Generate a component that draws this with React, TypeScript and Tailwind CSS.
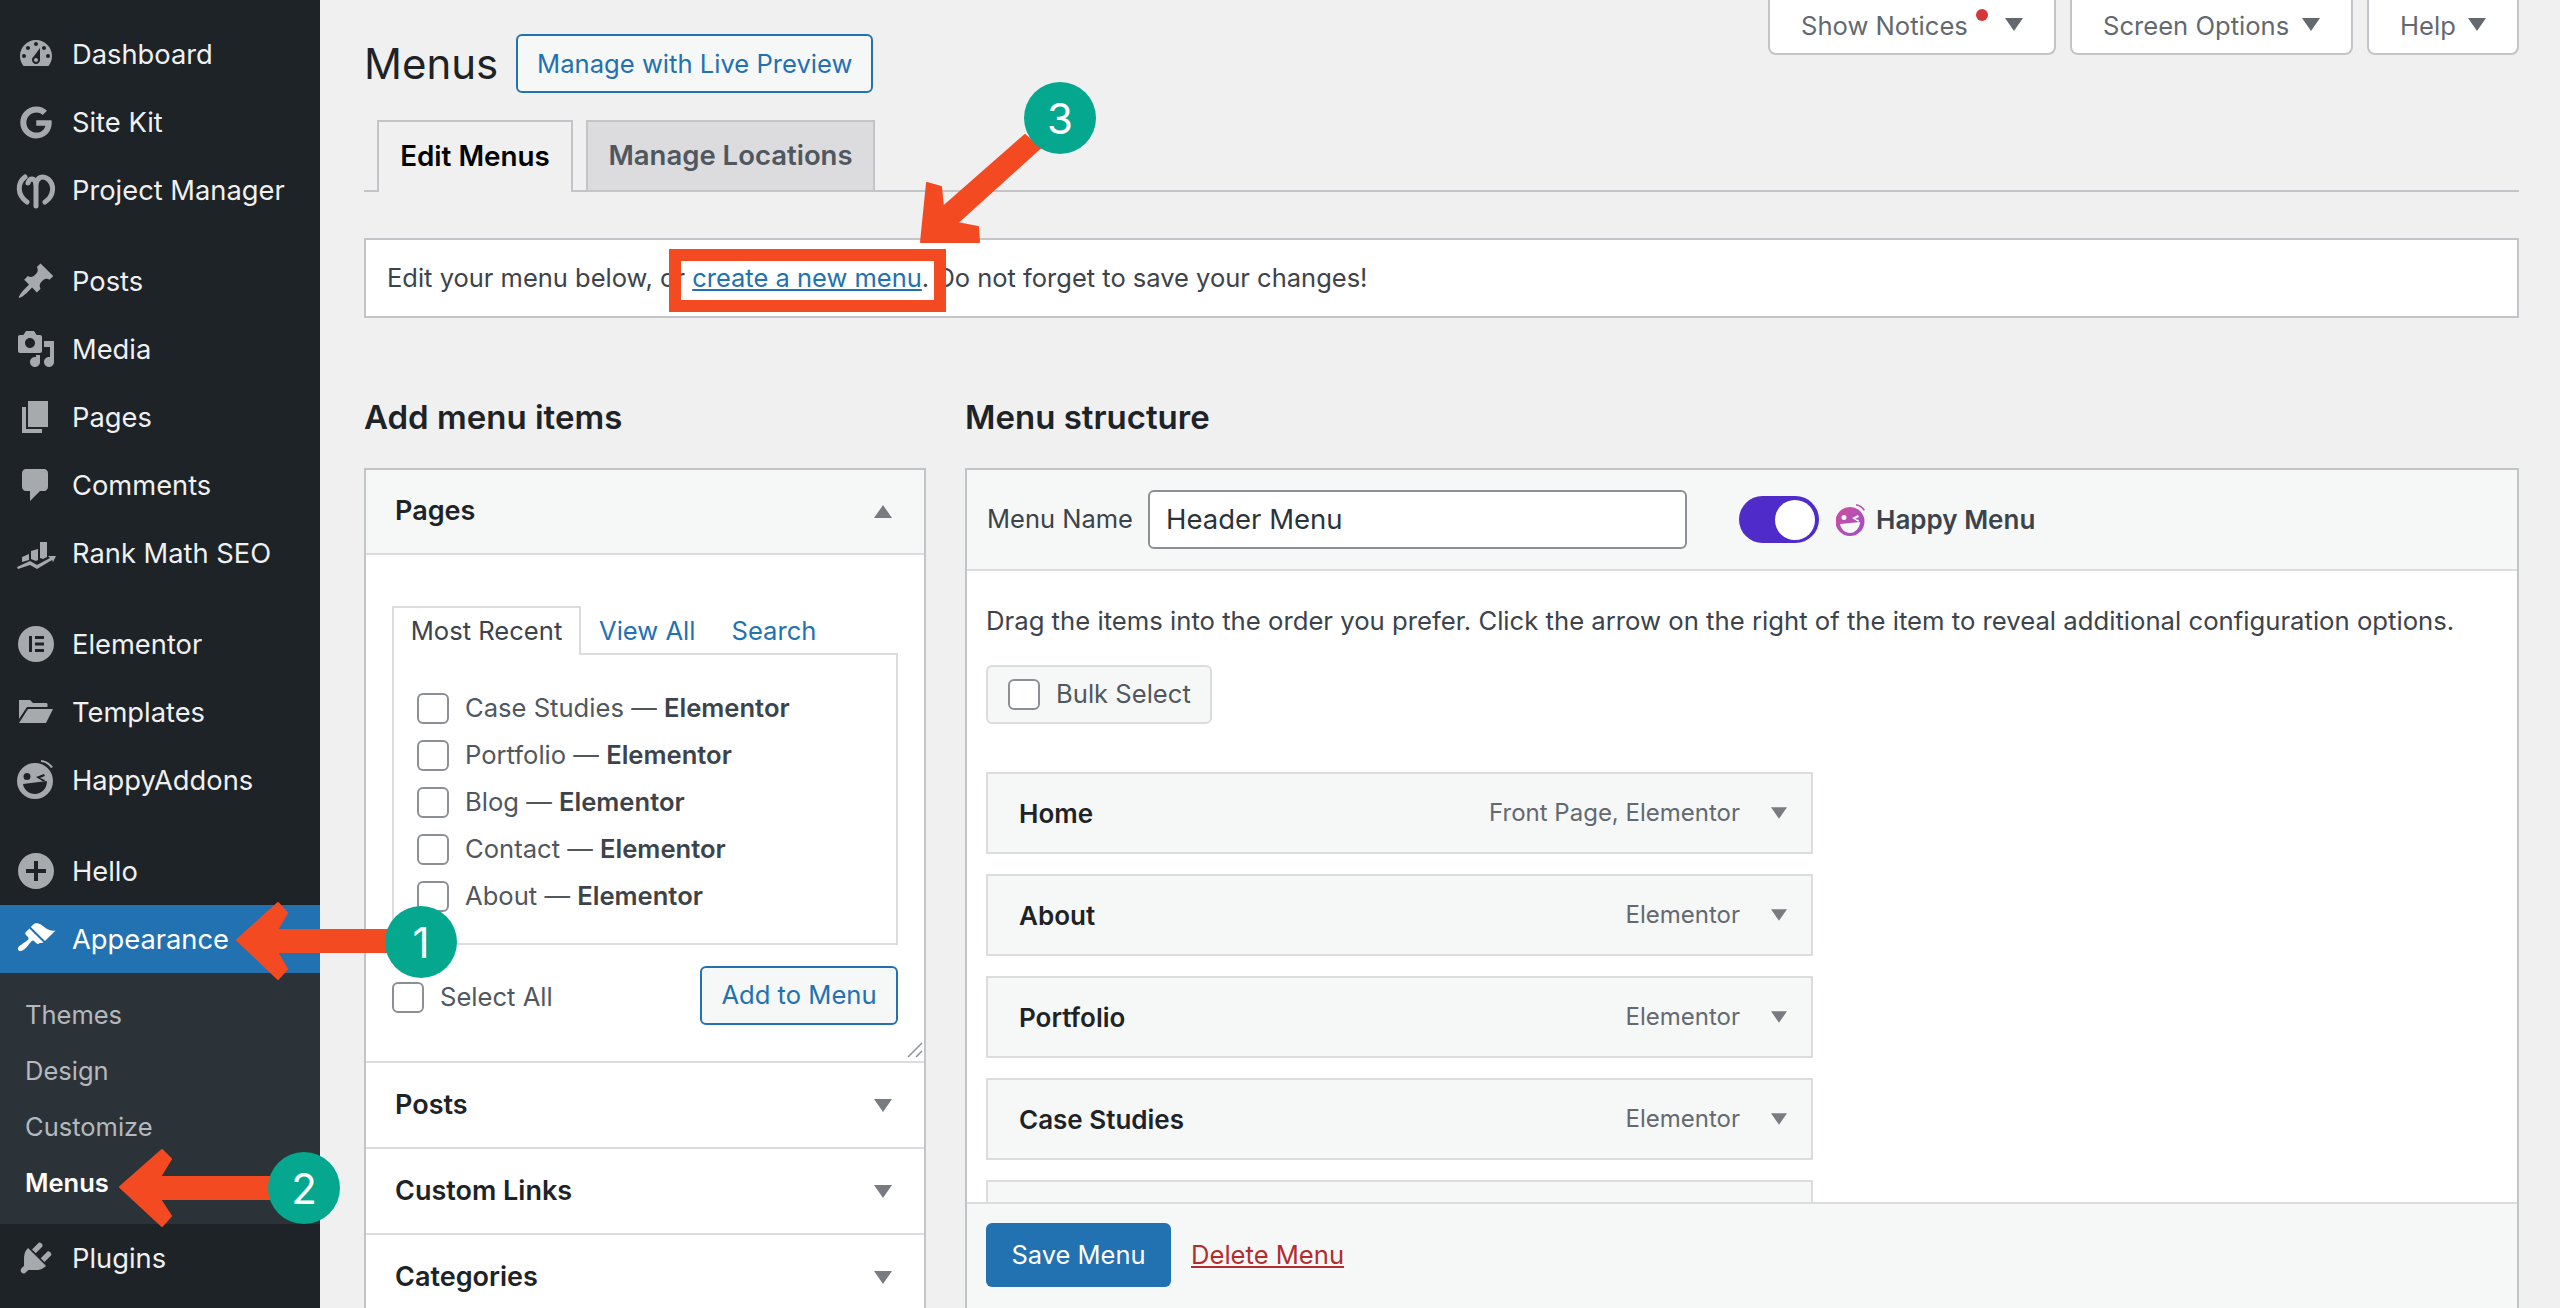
import type { ReactNode } from "react";

type NavItem = { label: string; icon: ReactNode; gapBefore?: boolean };

function Dash({ d }: { d: string }) {
  return (
    <svg viewBox="0 0 20 20" className="w-10 h-10 shrink-0" fill="currentColor">
      <path d={d} fillRule="evenodd" />
    </svg>
  );
}

function Box({ children }: { children: ReactNode }) {
  return (
    <svg viewBox="0 0 40 40" className="w-10 h-10 shrink-0" fill="currentColor">
      {children}
    </svg>
  );
}

const navTop: NavItem[] = [
  { label: "Dashboard", icon: <Dash d="M3.76 16h12.48c1.1-1.37 1.76-3.11 1.76-5 0-4.42-3.58-8-8-8s-8 3.58-8 8c0 1.89.66 3.63 1.76 5zM10 4c.55 0 1 .45 1 1s-.45 1-1 1-1-.45-1-1 .45-1 1-1zM6 6c.55 0 1 .45 1 1s-.45 1-1 1-1-.45-1-1 .45-1 1-1zm8 0c.55 0 1 .45 1 1s-.45 1-1 1-1-.45-1-1 .45-1 1-1zm-5.37 5.55L12 7v6c0 1.1-.9 2-2 2s-2-.9-2-2c0-.57.24-1.08.63-1.45zM4 10c.55 0 1 .45 1 1s-.45 1-1 1-1-.45-1-1 .45-1 1-1zm12 0c.55 0 1 .45 1 1s-.45 1-1 1-1-.45-1-1 .45-1 1-1zm-5 3c0-.55-.45-1-1-1s-1 .45-1 1 .45 1 1 1 1-.45 1-1z" /> },
  {
    label: "Site Kit",
    icon: (
      <svg viewBox="0 0 488 512" className="w-10 h-[33px] shrink-0" fill="currentColor">
        <path d="M488 261.8C488 403.3 386.5 504 248 504 110.8 504 0 393.2 0 256S110.8 8 248 8c66.8 0 123 24.5 166.3 64.9l-67.5 64.9C258.5 52.6 94.3 116.6 94.3 256c0 86.5 69.1 156.6 153.7 156.6 98.2 0 135-70.4 140.8-106.9H248v-85.3h236.1c2.3 12.7 3.9 24.9 3.9 41.4z" />
      </svg>
    ),
  },
  {
    label: "Project Manager",
    icon: (
      <svg viewBox="0 0 40 40" className="w-10 h-10 shrink-0" fill="none" stroke="currentColor" strokeWidth="5" strokeLinecap="round">
        <path d="M11 32C1 25 1 13 9 7" />
        <path d="M12 13C14 7 19 8 20 14V36" />
        <path d="M20 14C21 7 27 5 32 9C39 15 38 26 29 32" />
      </svg>
    ),
  },
  { label: "Posts", gapBefore: true, icon: <Dash d="M10.44 3.02l1.82-1.82 6.36 6.35-1.83 1.82c-1.05-.68-2.48-.57-3.41.36l-.75.75c-.92.93-1.04 2.35-.35 3.41l-1.83 1.82-2.41-2.41-2.8 2.79c-.42.42-3.38 2.71-3.8 2.29s1.86-3.39 2.28-3.81l2.79-2.79L4.1 9.36l1.83-1.82c1.05.69 2.48.57 3.4-.36l.75-.75c.93-.92 1.05-2.35.36-3.41z" /> },
  { label: "Media", icon: <Dash d="M13 11V4c0-.55-.45-1-1-1h-1.67L9 1H5L3.67 3H2c-.55 0-1 .45-1 1v7c0 .55.45 1 1 1h10c.55 0 1-.45 1-1zM7 4.500c1.380 0 2.500 1.120 2.500 2.500S8.380 9.500 7 9.500 4.500 8.380 4.500 7 5.620 4.500 7 4.500zM14 6h5v10.500c0 1.380-1.120 2.500-2.500 2.500S14 17.880 14 16.500s1.120-2.500 2.500-2.500c.17 0 .34.02.5.05V9h-3V6zm-4 8.050V13h2v3.500c0 1.380-1.120 2.500-2.500 2.500S7 17.880 7 16.500 8.120 14 9.500 14c.17 0 .34.02.5.05z" /> },
  { label: "Pages", icon: <Dash d="M6 15V2h10v13H6zm-1 1h8v2H3V5h2v11z" /> },
  { label: "Comments", icon: <Dash d="M5 2h9c1.100 0 2 .9 2 2v7c0 1.100-.9 2-2 2h-2l-5 5v-5H5c-1.100 0-2-.9-2-2V4c0-1.100.9-2 2-2z" /> },
  {
    label: "Rank Math SEO",
    icon: (
      <Box>
        <path d="M6 24l7-3v6l-7 2zM15 18l7-2v11l-2 1-5-2zM24 9h7v15l-4 2-3-1z" />
        <path d="M1 34l13-6 7 4 13-7-2-2 8 0-3 6-1-2-15 9-7-4-12 4z" />
      </Box>
    ),
  },
  {
    label: "Elementor",
    gapBefore: true,
    icon: (
      <Box>
        <path fillRule="evenodd" d="M20 2a18 18 0 1 0 0 36 18 18 0 0 0 0-36zM13 12h3v16h-3zM19 12h9v3h-9zM19 18.500h9v3h-9zM19 25h9v3h-9z" />
      </Box>
    ),
  },
  {
    label: "Templates",
    icon: (
      <Box>
        <path d="M3 8h11l3 3h13c1 0 1.500.5 1.500 1.500V15H11L3 27z" />
        <path d="M12 17h25l-7 14H3z" />
      </Box>
    ),
  },
  {
    label: "HappyAddons",
    icon: (
      <Box>
        <path fillRule="evenodd" d="M19 3a18 18 0 1 0 0 36 18 18 0 0 0 0-36zM11 13a3.500 3.500 0 1 1 0 7 3.500 3.500 0 0 1 0-7zM20 17l8-3 1 2-5 2 5 2-1 2zM7 24l24-3c0 8-6 13-12 13S8 30 7 24z" />
        <path d="M25 0c5 .5 9 3 12 7l-2 1c-2-3-6-6-10-6z" />
      </Box>
    ),
  },
  { label: "Hello", gapBefore: true, icon: <Dash d="M10 1c-5 0-9 4-9 9s4 9 9 9 9-4 9-9-4-9-9-9zm5 10h-4v4H9v-4H5V9h4V5h2v4h4v2z" /> },
];

const appearanceIcon = "M14.480 11.060L7.410 3.990l1.500-1.500c.5-.56 2.300-.47 3.510.32 1.210.8 1.430 1.280 2.910 2.100 1.180.64 2.450 1.260 4.450.85zm-.71.710L6.700 4.700 4.930 6.470c-.39.39-.39 1.020 0 1.410l1.060 1.060c.39.39.39 1.030 0 1.420-.6.6-1.430 1.110-2.210 1.690-.35.26-.7.53-1.010.84C1.430 13.230.4 14.870 1.300 15.780c.9.9 2.550-.13 3.880-1.470.31-.31.58-.66.85-1.010.57-.78 1.080-1.610 1.690-2.210.39-.39 1.020-.39 1.410 0l1.060 1.060c.39.39 1.020.39 1.410 0z";
const pluginsIcon = "M13.110 4.360L9.870 7.600 8 5.730l3.240-3.240c.35-.34 1.050-.2 1.560.32.52.51.66 1.210.31 1.550zm-8 1.770l.91-1.120 9.010 9.010-1.190.84c-.71.71-2.630 1.160-3.820 1.160H6.140L4.900 17.260c-.59.59-1.540.59-2.120 0-.59-.58-.59-1.530 0-2.120l1.240-1.240v-3.880c0-1.130.4-3.190 1.090-3.890zm7.260 3.970l3.240-3.240c.34-.35 1.040-.21 1.550.31.52.51.66 1.210.31 1.550l-3.240 3.250z";

function NavRow({ item }: { item: NavItem }) {
  return (
    <div className={`flex items-center h-[68px] pl-4 gap-4 text-[27.3px] text-[#f0f0f1] ${item.gapBefore ? "mt-[23px]" : ""}`}>
      <span className="w-10 flex justify-center text-[#a7aaad]">{item.icon}</span>
      <span className="pt-[2px]">{item.label}</span>
    </div>
  );
}

function Sidebar() {
  return (
    <aside className="w-[320px] shrink-0 h-full bg-[#1d2327] pt-5 overflow-hidden">
      {navTop.map(i => <NavRow key={i.label} item={i} />)}
      <div className="flex items-center h-[68px] pl-4 gap-4 text-[27.3px] text-white bg-[#2271b1]">
        <span className="w-10 flex justify-center"><Dash d={appearanceIcon} /></span>
        <span className="pt-[2px]">Appearance</span>
      </div>
      <div className="bg-[#2c3338] pt-[14px] pb-[13px] pl-[25px] text-[25.5px] text-[#b4b9be]">
        <div className="h-14 flex items-center">Themes</div>
        <div className="h-14 flex items-center">Design</div>
        <div className="h-14 flex items-center">Customize</div>
        <div className="h-14 flex items-center text-white font-semibold">Menus</div>
      </div>
      <NavRow item={{ label: "Plugins", icon: <Dash d={pluginsIcon} /> }} />
    </aside>
  );
}

function Caret({ up, color = "#787c82", size = "w-[18px] h-[13px]" }: { up?: boolean; color?: string; size?: string }) {
  return (
    <svg viewBox="0 0 18 13" className={`${size} shrink-0`} fill={color}>
      <path d={up ? "M9 0l9 13H0z" : "M0 0h18L9 13z"} />
    </svg>
  );
}

function Check() {
  return <input type="checkbox" readOnly className="appearance-none w-8 h-[31px] shrink-0 rounded-[6px] border-2 border-[#8c8f94] bg-white" />;
}

function TopButton({ label, dot, w }: { label: string; dot?: boolean; w: string }) {
  return (
    <div className={`relative ${w} h-[55px] bg-white border-2 border-t-0 border-[#c3c4c7] rounded-b-[8px] flex items-center pl-[31px] text-[25.6px] text-[#646970]`}>
      <span>{label}</span>
      {dot && <span className="absolute left-[206px] top-[9px] w-3 h-3 rounded-full bg-[#d63638]" />}
      <span className="absolute right-[31px] top-[18px]"><Caret color="#646970" /></span>
    </div>
  );
}

const pagesList = ["Case Studies", "Portfolio", "Blog", "Contact", "About"];
const menuItems = [
  { name: "Home", note: "Front Page, Elementor" },
  { name: "About", note: "Elementor" },
  { name: "Portfolio", note: "Elementor" },
  { name: "Case Studies", note: "Elementor" },
  { name: "", note: "" },
];

function AddMenuItems() {
  return (
    <section className="w-[562px] shrink-0">
      <h2 className="text-[33px] font-semibold text-[#1d2327] h-[52px] leading-[52px]">Add menu items</h2>
      <div className="border-2 border-[#c3c4c7] bg-white mt-[25px]">
        <div className="h-[85px] bg-[#f6f7f7] border-b-2 border-[#dcdcde] flex items-center justify-between pl-[29px] pr-[32px]">
          <span className="text-[27px] font-semibold text-[#1d2327]">Pages</span>
          <Caret up />
        </div>
        <div className="h-[508px] px-[26px] pt-[51px] relative border-b-2 border-[#dcdcde]">
          <div className="flex items-end h-[49px] text-[25.6px] relative z-10 -mb-[2px]">
            <div className="h-[49px] w-[189px] flex items-center justify-center border-2 border-b-0 border-[#dcdcde] bg-white text-[#3c434a]">Most Recent</div>
            <div className="h-[47px] flex items-center pl-[18px] text-[#2271b1]">View All</div>
            <div className="h-[47px] flex items-center pl-[36px] text-[#2271b1]">Search</div>
          </div>
          <div className="border-2 border-[#dcdcde] h-[292px] pl-[23px] pt-[38px] flex flex-col gap-4">
            {pagesList.map(p => (
              <div key={p} className="flex items-center gap-4 h-[31px] text-[25.6px] text-[#50575e]">
                <Check />
                <span>{p} — <b className="font-semibold text-[#3c434a]">Elementor</b></span>
              </div>
            ))}
          </div>
          <div className="flex items-center justify-between mt-[21px]">
            <div className="flex items-center gap-4 text-[25.6px] text-[#50575e] pt-[4px]">
              <Check />
              <span>Select All</span>
            </div>
            <div className="h-[59px] w-[198px] flex items-center justify-center rounded-[6px] border-2 border-[#2271b1] bg-[#f6f7f7] text-[25.6px] text-[#2271b1]">Add to Menu</div>
          </div>
          <svg viewBox="0 0 16 16" className="absolute right-[1px] bottom-[3px] w-4 h-4" stroke="#8c8f94" strokeWidth="1.500">
            <path d="M1 15L15 1M9 15l6-6" />
          </svg>
        </div>
        {["Posts", "Custom Links", "Categories"].map(s => (
          <div key={s} className="h-[86px] border-b-2 border-[#dcdcde] flex items-center justify-between pl-[29px] pr-[32px]">
            <span className="text-[27px] font-semibold text-[#1d2327]">{s}</span>
            <Caret />
          </div>
        ))}
      </div>
    </section>
  );
}

function MenuStructure() {
  return (
    <section className="flex-1 min-w-0 h-full flex flex-col">
      <h2 className="text-[33px] font-semibold text-[#1d2327] h-[52px] leading-[52px] shrink-0">Menu structure</h2>
      <div className="flex-1 min-h-0 flex flex-col border-2 border-b-0 border-[#c3c4c7] bg-white mt-[25px]">
        <div className="h-[101px] shrink-0 bg-[#f6f7f7] border-b-2 border-[#dcdcde] flex items-center pl-[20px]">
          <span className="w-[143px] whitespace-nowrap text-[25.5px] text-[#3c434a]">Menu Name</span>
          <div className="ml-[18px] w-[539px] h-[59px] rounded-[6px] border-2 border-[#8c8f94] bg-white flex items-center pl-[16px] text-[27.500px] text-[#2c3338]">Header Menu</div>
          <div className="ml-[52px] w-20 h-[47px] rounded-full bg-[#4f2cc9] flex items-center justify-end pr-[4px]">
            <span className="w-10 h-10 rounded-full bg-white" />
          </div>
          <svg viewBox="0 0 30 32" className="ml-[17px] w-[30px] h-8 shrink-0">
            <defs>
              <linearGradient id="hm" x1="0" y1="0" x2="1" y2="1">
                <stop offset="0" stopColor="#d14f9e" />
                <stop offset="1" stopColor="#9a4fc9" />
              </linearGradient>
            </defs>
            <path fill="url(#hm)" fillRule="evenodd" d="M14 3a14.500 14.500 0 1 0 0 29 14.500 14.500 0 0 0 0-29zM8 11a2.500 2.500 0 1 1 0 5 2.500 2.500 0 0 1 0-5zM16 14l6-3 1 2-4 2 4 1-.5 2zM4 20l20-2c0 6-5 11-10 11S5 25 4 20z" />
            <path fill="#b04fb5" d="M20 0c4 .5 7 2.500 9 6l-1.500.8C26 4 23 2 20 1.500z" />
          </svg>
          <span className="ml-[10px] text-[26px] font-semibold text-[#3c434a]">Happy Menu</span>
        </div>
        <div className="flex-1 min-h-0 overflow-hidden px-[19px]">
          <p className="text-[25.700px] text-[#3c434a] mt-[30px] leading-[40px]">Drag the items into the order you prefer. Click the arrow on the right of the item to reveal additional configuration options.</p>
          <div className="mt-[24px] w-[226px] h-[59px] rounded-[6px] border-2 border-[#dcdcde] bg-[#f6f7f7] flex items-center pl-[20px] gap-4 text-[25.6px] text-[#50575e]">
            <Check />
            <span>Bulk Select</span>
          </div>
          <div className="mt-[48px] w-[827px] flex flex-col gap-5">
            {menuItems.map((m, i) => (
              <div key={i} className="h-[82px] shrink-0 bg-[#f6f7f7] border-2 border-[#dcdcde] flex items-center justify-between pl-[31px] pr-[24px]">
                <span className="text-[26px] font-semibold text-[#1d2327]">{m.name}</span>
                {m.name && (
                  <span className="flex items-center gap-[31px] text-[24px] text-[#646970]">
                    {m.note}
                    <Caret size="w-[16px] h-[14px]" />
                  </span>
                )}
              </div>
            ))}
          </div>
        </div>
        <div className="h-[106px] shrink-0 bg-[#f6f7f7] border-t-2 border-[#dcdcde] flex items-start pt-[19px] pl-[19px] gap-[20px]">
          <div className="w-[185px] h-[64px] rounded-[6px] bg-[#2271b1] text-white text-[25.5px] flex items-center justify-center">Save Menu</div>
          <span className="h-[64px] flex items-center text-[25.6px] text-[#b32d2e] underline">Delete Menu</span>
        </div>
      </div>
    </section>
  );
}

function Badge({ n, pos }: { n: number; pos: string }) {
  return (
    <div className={`absolute ${pos} w-[72px] h-[72px] rounded-full bg-[#05a88e] text-white text-[42px] flex items-center justify-center`}>{n}</div>
  );
}

function Annotations() {
  return (
    <div className="absolute inset-0 pointer-events-none">
      <svg viewBox="0 0 2560 1308" className="absolute inset-0 w-full h-full" fill="#f44a22" stroke="#f44a22" strokeWidth="2" strokeLinejoin="round">
        <path d="M237 940L278 903L287 913L277 930H395V952H277L287 969L278 979Z" />
        <path d="M120 1187L162 1150L171 1159L160 1177H280V1199H160L171 1216L162 1226Z" />
        <path d="M921 242L927 183L941 187L943 207L1025 135L1040 148L957 223L978 227L979 242Z" />
      </svg>
      <div className="absolute left-[669px] top-[249px] w-[277px] h-[63px] border-[12px] border-[#f44a22]" />
      <Badge n={1} pos="left-[385px] top-[906px]" />
      <Badge n={2} pos="left-[268px] top-[1152px]" />
      <Badge n={3} pos="left-[1024px] top-[82px]" />
    </div>
  );
}

export default function App() {
  return (
    <div className="relative w-[2560px] h-[1308px] overflow-hidden flex bg-[#f0f0f1] font-['Inter',sans-serif]">
      <Sidebar />
      <main className="flex-1 min-w-0 h-full flex flex-col pl-[44px] pr-[41px]">
        <div className="flex justify-between items-start shrink-0 h-[93px]">
          <div className="flex items-center gap-[18px] mt-[34px]">
            <h1 className="text-[42px] h-[59px] leading-[59px] text-[#1d2327]">Menus</h1>
            <div className="w-[357px] h-[59px] pt-[1px] rounded-[6px] border-2 border-[#2271b1] bg-[#f6f7f7] text-[25.6px] text-[#2271b1] flex items-center justify-center">Manage with Live Preview</div>
          </div>
          <div className="flex gap-[14px]">
            <TopButton label="Show Notices" dot w="w-[288px]" />
            <TopButton label="Screen Options" w="w-[283px]" />
            <TopButton label="Help" w="w-[152px]" />
          </div>
        </div>
        <div className="mt-[27px] h-[72px] shrink-0 border-b-2 border-[#c3c4c7] flex items-end pl-[13px] gap-[13px]">
          <div className="w-[196px] h-[72px] -mb-[2px] bg-[#f0f0f1] border-2 border-b-0 border-[#c3c4c7] flex items-center justify-center text-[27.800px] font-semibold text-[#000]">Edit Menus</div>
          <div className="w-[289px] h-[70px] bg-[#dcdcde] border-2 border-b-0 border-[#c3c4c7] flex items-center justify-center text-[27.500px] font-semibold text-[#50575e]">Manage Locations</div>
        </div>
        <div className="mt-[46px] h-[80px] shrink-0 bg-white border-2 border-[#c3c4c7] flex items-center pl-[21px] pt-[1px] text-[25.5px] text-[#3c434a]">
          <span>Edit your menu below, or <span className="text-[#2271b1] underline">create a new menu</span>. Do not forget to save your changes!</span>
        </div>
        <div className="flex-1 min-h-0 flex gap-[39px] pt-[73px]">
          <AddMenuItems />
          <MenuStructure />
        </div>
      </main>
      <Annotations />
    </div>
  );
}
